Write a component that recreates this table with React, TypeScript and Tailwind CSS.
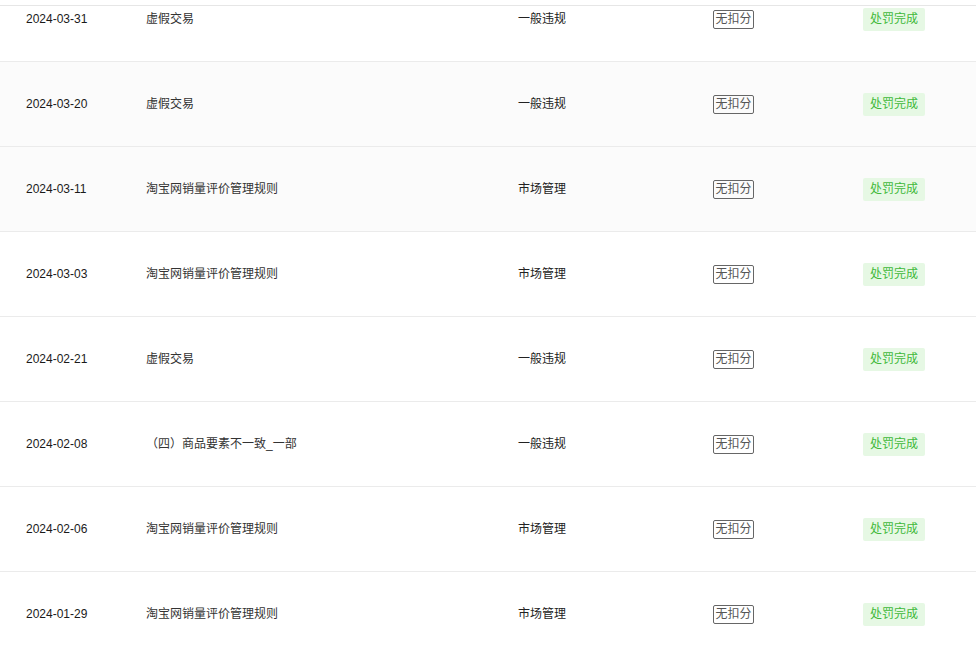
import React from "react";

const rows = [
  { date: "2024-03-31", name: "虚假交易", type: "一般违规", bg: "bg-white" },
  { date: "2024-03-20", name: "虚假交易", type: "一般违规", bg: "bg-[#fbfbfb]" },
  { date: "2024-03-11", name: "淘宝网销量评价管理规则", type: "市场管理", bg: "bg-[#fbfbfb]" },
  { date: "2024-03-03", name: "淘宝网销量评价管理规则", type: "市场管理", bg: "bg-white" },
  { date: "2024-02-21", name: "虚假交易", type: "一般违规", bg: "bg-white" },
  { date: "2024-02-08", name: "（四）商品要素不一致_一部", type: "一般违规", bg: "bg-white" },
  { date: "2024-02-06", name: "淘宝网销量评价管理规则", type: "市场管理", bg: "bg-white" },
  { date: "2024-01-29", name: "淘宝网销量评价管理规则", type: "市场管理", bg: "bg-white" },
];

export default function App() {
  return (
    <div
      className="relative w-[976px] h-[656px] overflow-hidden bg-white text-[12px] leading-[16px]"
      style={{ fontFamily: '"Liberation Sans", "Noto Sans CJK SC", sans-serif' }}
    >
      <div className="-mt-[23px] flex flex-col">
        {rows.map((r, i) => (
          <div
            key={i}
            className={`grid grid-cols-[146px_372px_195px_150px_1fr] items-center h-[85px] border-b border-[#ebebeb] ${r.bg}`}
          >
            <div className="pl-[26px] text-[#1a1a1a]">{r.date}</div>
            <div className="text-[#333333]">{r.name}</div>
            <div className="text-[#222222]">{r.type}</div>
            <div className="flex">
              <span className="border border-[#666666] rounded-[2px] px-[1.5px] h-[19px] flex items-center text-[#555555]">
                无扣分
              </span>
            </div>
            <div className="flex">
              <span className="bg-[#e6f8e4] text-[#3fb93a] rounded-[2px] px-[7px] h-[23px] flex items-center">
                处罚完成
              </span>
            </div>
          </div>
        ))}
      </div>
      <div className="absolute left-0 right-0 top-[5px] h-px bg-[#e6e6e6]" />
    </div>
  );
}
